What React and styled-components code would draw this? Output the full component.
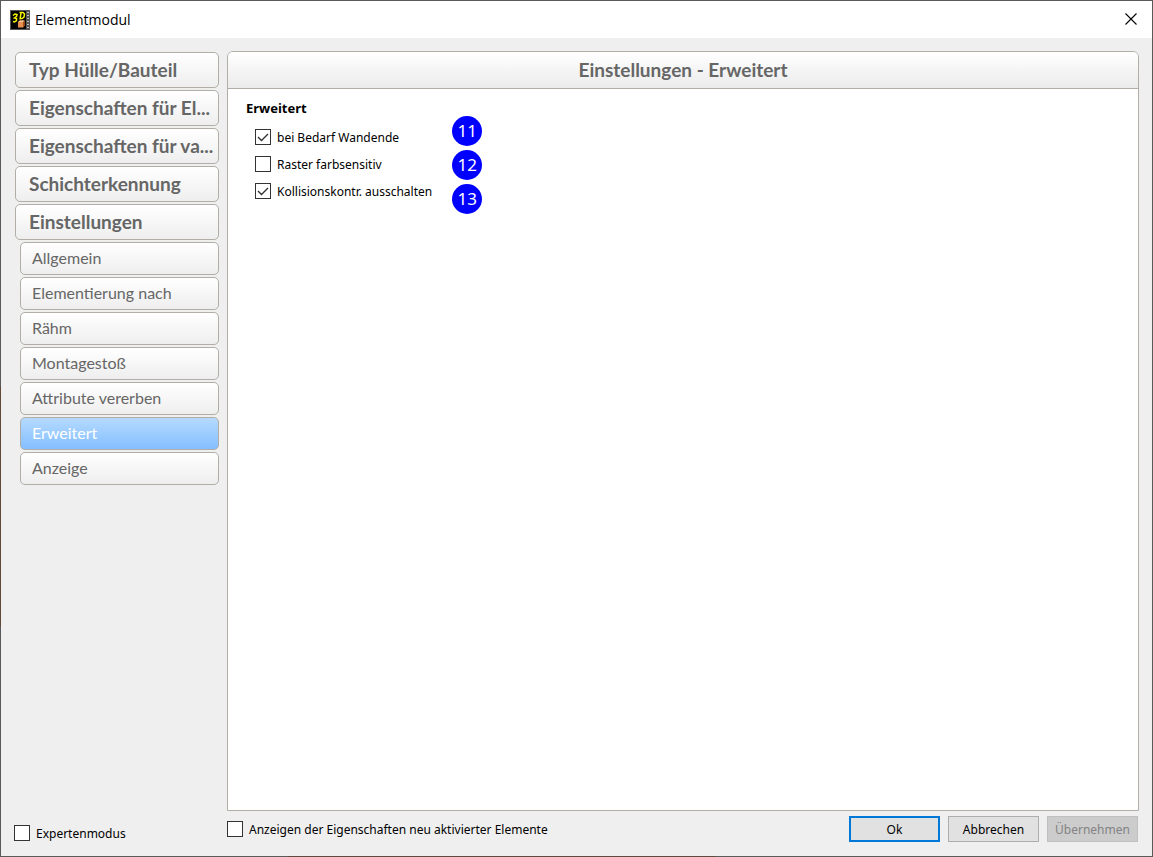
import React, { useState } from 'react';
import styled, { createGlobalStyle } from 'styled-components';

const GlobalStyle = createGlobalStyle`
  * {
    box-sizing: border-box;
  }
  body {
    margin: 0;
    font-family: 'Noto Sans', 'Open Sans', sans-serif;
    font-size: 12px;
    line-height: 16px;
    color: #000;
  }
  button, input {
    font-family: inherit;
    margin: 0;
  }
`;

// Fensterrahmen, links und unten scheint der Hintergrund durch
const Dialog = styled.div`
  display: flex;
  flex-direction: column;
  min-height: 100vh;
  border: 1px solid transparent;
  background:
    linear-gradient(#efefef, #efefef) padding-box,
    linear-gradient(transparent 45%, #5f4a3c 45%, #5f4a3c 73%, transparent 73%) left / 1px 100% no-repeat border-box,
    linear-gradient(90deg, transparent 25%, #5f4a3c 25%, #5f4a3c 62%, transparent 62%) bottom / 100% 1px no-repeat border-box,
    linear-gradient(#5a5a5a, #5a5a5a) border-box;
`;

const TitleBar = styled.header`
  display: flex;
  align-items: center;
  gap: 5px;
  height: 37px;
  padding: 0 14px 0 9px;
  background: #fff;

  h1 {
    flex: 1;
    margin: 0;
    font-family: 'Open Sans', sans-serif;
    font-size: 14px;
    font-weight: 400;
    line-height: 20px;
  }
`;

const CloseBtn = styled.button`
  display: flex;
  padding: 0 0 2px;
  border: none;
  background: none;
`;

const Content = styled.div`
  flex: 1;
  display: grid;
  grid-template-columns: 205px 1fr;
  column-gap: 8px;
  padding: 13px;
`;

// linke Spalte
const SideBar = styled.aside`
  display: flex;
  flex-direction: column;
  justify-content: space-between;
  padding-bottom: 1px;
`;

const Nav = styled.nav`
  display: flex;
  flex-direction: column;
  gap: 2px;
  padding: 1px 0 0 1px;
`;

const NavBtn = styled.button`
  height: 36px;
  padding: 0 4px 0 13px;
  border: 1px solid #b2aea7;
  border-radius: 5px;
  background: linear-gradient(#fff, #eee);
  color: #666;
  font-family: Lato, sans-serif;
  font-size: 19px;
  font-weight: 700;
  line-height: 24px;
  text-align: left;
  white-space: nowrap;
`;

const SubBtn = styled(NavBtn)`
  height: 33px;
  margin-left: 5px;
  padding: 0 4px 2px 11px;
  font-size: 16px;
  font-weight: 400;
  color: ${(props) => (props.$active ? '#fff' : '#666')};
  background: ${(props) => (props.$active ? 'linear-gradient(#b5daff, #84bfff)' : 'linear-gradient(#fff, #eee)')};
`;

// rechte Seite
const Main = styled.main`
  display: flex;
  flex-direction: column;
`;

const Panel = styled.section`
  flex: 1;
  border: 1px solid #b2aea7;
  border-radius: 6px 6px 0 0;
  background: #fff;
`;

const PanelTitle = styled.h2`
  margin: 0;
  height: 37px;
  border-bottom: 1px solid #b2aea7;
  border-radius: 5px 5px 0 0;
  background: linear-gradient(#fff, #ebebeb);
  color: #666;
  font-family: Lato, sans-serif;
  font-size: 19px;
  font-weight: 700;
  line-height: 36px;
  text-align: center;
`;

const PanelBody = styled.div`
  display: flex;
  gap: 20px;
  padding: 11px 18px;
`;

const Options = styled.div`
  h3 {
    margin: 0 0 12px;
    font-size: 13px;
    font-weight: 700;
    line-height: 16px;
  }
`;

const OptionList = styled.div`
  display: flex;
  flex-direction: column;
  gap: 9px;
  padding-left: 9px;
`;

const CheckLabel = styled.label`
  display: grid;
  grid-template-columns: 16px auto;
  column-gap: 6px;
  align-items: center;
  justify-content: start;

  input {
    grid-area: 1 / 1;
    appearance: none;
    width: 16px;
    height: 16px;
    border: 1px solid #333;
    background: #fff;
  }
  svg {
    grid-area: 1 / 1;
    pointer-events: none;
  }
  span {
    grid-area: 1 / 2;
    padding-top: 2px;
  }
`;

const Markers = styled.div`
  display: flex;
  flex-direction: column;
  gap: 4px;
  padding-top: 16px;
`;

const Marker = styled.span`
  width: 30px;
  height: 30px;
  border-radius: 50%;
  background: #00f;
  color: #fff;
  font-size: 17px;
  line-height: 30px;
  text-align: center;
`;

const Footer = styled.footer`
  display: flex;
  justify-content: space-between;
  align-items: center;
  padding: 5px 1px 1px 0;
`;

const Actions = styled.div`
  display: flex;
  gap: 8px;
`;

const ActionBtn = styled.button`
  width: 91px;
  height: 26px;
  padding: 2px 0 0;
  border: ${(props) => (props.$primary ? '2px solid #0078d7' : '1px solid #adadad')};
  background: #e1e1e1;
  color: #000;
  font-size: 12px;
  line-height: 16px;

  &:disabled {
    border-color: #bfbfbf;
    background: #ccc;
    color: #838383;
  }
`;

const sections = [
  'Typ Hülle/Bauteil',
  'Eigenschaften für El...',
  'Eigenschaften für va...',
  'Schichterkennung',
  'Einstellungen',
];

const pages = [
  'Allgemein',
  'Elementierung nach',
  'Rähm',
  'Montagestoß',
  'Attribute vererben',
  'Erweitert',
  'Anzeige',
];

function AppIcon() {
  return (
    <svg width="20" height="20" viewBox="0 0 20 20" aria-hidden="true">
      <rect width="20" height="20" fill="#555" />
      <rect x="1" y="1" width="15" height="18" fill="#050505" />
      <path d="M17 2.5h2M17 5.5h2M17 8.5h2M17 11.5h2M17 14.5h2M17 17.5h2" stroke="#bbb" />
      <path d="M3 5.500l2-1.500 2 .5-.5 2L4.500 8l2 .5v2l-2 1.500-1.500-.5" fill="none" stroke="#f5f500" strokeWidth="1.500" />
      <path d="M11 3l-1 6.500M9.500 2.500h3.500l1.500 1.500-.5 3-2 1.500h-1.500" fill="none" stroke="#f5f500" strokeWidth="1.500" />
      <path d="M8 12l2-1.500h4.500v5L13 17.500H8z" fill="#e8904f" />
      <path d="M8 12l2-1.500h4.500L13 12z" fill="#ffc89a" />
      <path d="M13 12l1.500-1.500v5L13 17.500z" fill="#a9501a" />
    </svg>
  );
}

function CheckBox({ label, defaultChecked = false }) {
  const [checked, setChecked] = useState(defaultChecked);

  return (
    <CheckLabel>
      <input type="checkbox" checked={checked} onChange={(e) => setChecked(e.target.checked)} />
      {checked && (
        <svg width="16" height="16" viewBox="0 0 16 16" aria-hidden="true">
          <path d="M3 8l3.500 3.500L13 5" fill="none" stroke="#333" strokeWidth="1.400" />
        </svg>
      )}
      <span>{label}</span>
    </CheckLabel>
  );
}

function App() {
  const [page, setPage] = useState('Erweitert');

  return (
    <>
      <GlobalStyle />
      <Dialog>
        <TitleBar>
          <AppIcon />
          <h1>Elementmodul</h1>
          <CloseBtn type="button" aria-label="Schließen">
            <svg width="14" height="14" viewBox="0 0 14 14">
              <path d="M1.500 1.500l11 11M12.500 1.500l-11 11" stroke="#000" strokeWidth="1.100" />
            </svg>
          </CloseBtn>
        </TitleBar>

        <Content>
          <SideBar>
            <Nav>
              {sections.map((name) => (
                <NavBtn key={name} type="button">{name}</NavBtn>
              ))}
              {pages.map((name) => (
                <SubBtn key={name} type="button" $active={name === page} onClick={() => setPage(name)}>
                  {name}
                </SubBtn>
              ))}
            </Nav>
            <CheckBox label="Expertenmodus" />
          </SideBar>

          <Main>
            <Panel>
              <PanelTitle>Einstellungen - {page}</PanelTitle>
              <PanelBody>
                <Options>
                  <h3>{page}</h3>
                  <OptionList>
                    <CheckBox label="bei Bedarf Wandende" defaultChecked />
                    <CheckBox label="Raster farbsensitiv" />
                    <CheckBox label="Kollisionskontr. ausschalten" defaultChecked />
                  </OptionList>
                </Options>
                <Markers>
                  <Marker>11</Marker>
                  <Marker>12</Marker>
                  <Marker>13</Marker>
                </Markers>
              </PanelBody>
            </Panel>
            <Footer>
              <CheckBox label="Anzeigen der Eigenschaften neu aktivierter Elemente" />
              <Actions>
                <ActionBtn type="button" $primary>Ok</ActionBtn>
                <ActionBtn type="button">Abbrechen</ActionBtn>
                <ActionBtn type="button" disabled>Übernehmen</ActionBtn>
              </Actions>
            </Footer>
          </Main>
        </Content>
      </Dialog>
    </>
  );
}

export default App;
